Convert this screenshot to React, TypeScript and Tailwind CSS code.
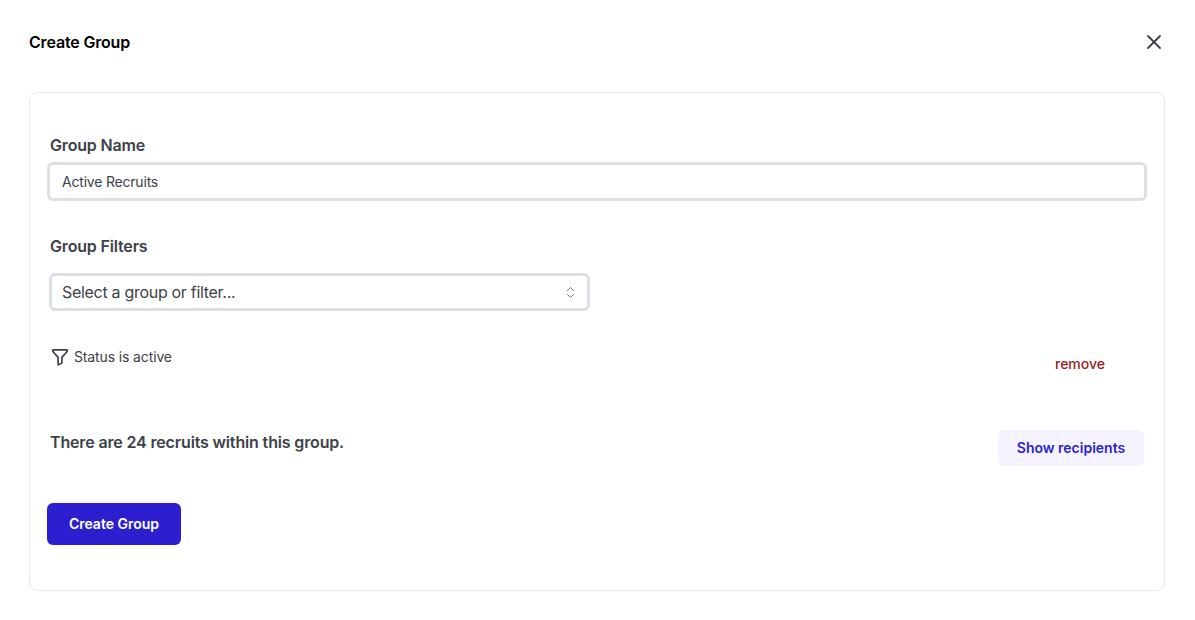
import { X, ChevronsUpDown } from "lucide-react";

export default function App() {
  return (
    <div className="h-[620px] w-[1195px] overflow-hidden bg-white font-['Inter',sans-serif] text-[#3d4149]">
      <header className="flex h-[84px] items-center justify-between pl-[29px] pr-[29px]">
        <h1 className="text-base font-semibold tracking-[-0.17px] text-black">Create Group</h1>
        <X className="h-6 w-6 text-[#3d4149]" strokeWidth={1.8} />
      </header>
      <main className="mx-[29px] mt-2 h-[499px] w-[1136px] rounded-lg border border-[#e8e9ec] pl-[17px] pr-[20px] pt-[40px]">
        <label className="ml-[3px] block text-base font-semibold leading-6 tracking-[-0.17px]">Group Name</label>
        <div className="mt-[5px] flex h-[39px] w-[1100px] items-center rounded-md border-[3px] border-[#dce0e5] pl-3 text-sm tracking-[-0.2px]">
          Active Recruits
        </div>
        <label className="ml-[3px] mt-[33px] block text-base font-semibold leading-6 tracking-[-0.17px]">Group Filters</label>
        <div className="ml-[2px] mt-[15px] flex h-[38px] w-[541px] items-center justify-between rounded-md border-[3px] border-[#dce0e5] pl-[10px] pr-[9px] text-base">
          <span className="tracking-[-0.3px]">Select a group or filter...</span>
          <ChevronsUpDown className="h-[15px] w-[15px] text-[#6b7280]" strokeWidth={1.5} />
        </div>
        <div className="ml-[4px] mt-[36px] flex h-[40px] items-start justify-between pr-[39px]">
          <div className="flex items-center gap-[5px] text-sm leading-5 tracking-[-0.13px]">
            <svg
              viewBox="0 0 24 24"
              className="h-[18px] w-[18px]"
              fill="none"
              stroke="currentColor"
              strokeWidth={2.2}
              strokeLinejoin="round"
              strokeLinecap="round"
            >
              <path d="M2.5 2.5h19v2.2L14.5 12.5v7.5l-5 2.5V12.5L2.5 4.7z" />
            </svg>
            <span>Status is active</span>
          </div>
          <span className="mt-[7px] text-sm font-medium leading-5 text-[#991b1b]">remove</span>
        </div>
        <div className="ml-[3px] mt-[43px] flex items-start justify-between">
          <p className="text-base font-semibold leading-6 tracking-[-0.15px]">There are 24 recruits within this group.</p>
          <button className="flex h-9 w-[146px] items-center justify-center rounded-md bg-[#f5f3ff] text-sm font-semibold text-[#2d1fd0]">
            Show recipients
          </button>
        </div>
        <button className="mt-[37px] flex h-[42px] w-[134px] items-center justify-center rounded-md bg-[#2d1fd0] text-sm font-semibold text-white">
          Create Group
        </button>
      </main>
    </div>
  );
}
